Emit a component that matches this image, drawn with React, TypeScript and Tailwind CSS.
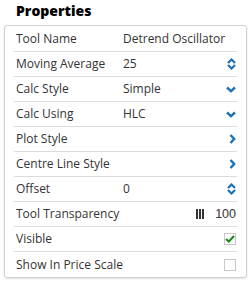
import type { ReactNode } from "react"

const blue = "#1a73b8"

function Stepper() {
    return (
        <svg width="9" height="12" viewBox="0 0 9 12">
            <path d="M1 5 L4.5 1.5 L8 5" fill="none" stroke={blue} strokeWidth="2.2" />
            <path d="M1 7 L4.5 10.5 L8 7" fill="none" stroke={blue} strokeWidth="2.2" />
        </svg>
    )
}

function ChevronDown() {
    return (
        <svg width="10" height="7" viewBox="0 0 10 7">
            <path d="M1 1.5 L5 5.2 L9 1.5" fill="none" stroke={blue} strokeWidth="2.4" />
        </svg>
    )
}

function ChevronRight() {
    return (
        <svg width="7" height="10" viewBox="0 0 7 10">
            <path d="M1.5 1 L5.2 5 L1.5 9" fill="none" stroke={blue} strokeWidth="2.4" />
        </svg>
    )
}

function Checkbox({ checked }: { checked?: boolean }) {
    return (
        <div className="w-[12px] h-[12px] border border-[#c8c8c8] bg-white flex items-center justify-center">
            {checked && (
                <svg width="10" height="8" viewBox="0 0 10 8">
                    <path d="M1 4 L3.8 6.5 L9 1" fill="none" stroke="#1e8a1e" strokeWidth="2.2" />
                </svg>
            )}
        </div>
    )
}

function Row({ label, value, icon, last }: { label: string; value?: string; icon?: ReactNode; last?: boolean }) {
    return (
        <div className={`flex items-center h-[25px] pl-[2px] pr-[1px] ${last ? "" : "border-b border-[#dcdcdc]"}`}>
            <div className="w-[107px] shrink-0">{label}</div>
            <div className="flex-1">{value}</div>
            <div className="flex items-center justify-end">{icon}</div>
        </div>
    )
}

export default function App() {
    return (
        <div className="w-[251px] h-[284px] bg-white text-[#333] text-[12px] font-['Open_Sans',sans-serif]">
            <h2 className="text-[14px] font-extrabold text-black pl-4 leading-[20px] pt-[1px]">Properties</h2>
            <div className="mx-1 mt-[4px] border border-[#d0d0d0] rounded-[3px] px-[9px] pt-[1px] shadow-[0_1px_2px_rgba(0,0,0,0.12)]">
                <Row label="Tool Name" value="Detrend Oscillator" />
                <Row label="Moving Average" value="25" icon={<Stepper />} />
                <Row label="Calc Style" value="Simple" icon={<ChevronDown />} />
                <Row label="Calc Using" value="HLC" icon={<ChevronDown />} />
                <Row label="Plot Style" icon={<ChevronRight />} />
                <Row label="Centre Line Style" icon={<ChevronRight />} />
                <Row label="Offset" value="0" icon={<Stepper />} />
                <Row
                    label="Tool Transparency"
                    icon={
                        <div className="flex items-center gap-[11px]">
                            <div className="flex gap-[1px] h-[10px]">
                                <div className="w-[2px] bg-[#333]" />
                                <div className="w-[2px] bg-[#333]" />
                                <div className="w-[2px] bg-[#333]" />
                            </div>
                            <span className="font-['Liberation_Sans',sans-serif] text-[12.5px]">100</span>
                        </div>
                    }
                />
                <Row label="Visible" icon={<Checkbox checked />} />
                <Row label="Show In Price Scale" icon={<Checkbox />} last />
            </div>
        </div>
    )
}
